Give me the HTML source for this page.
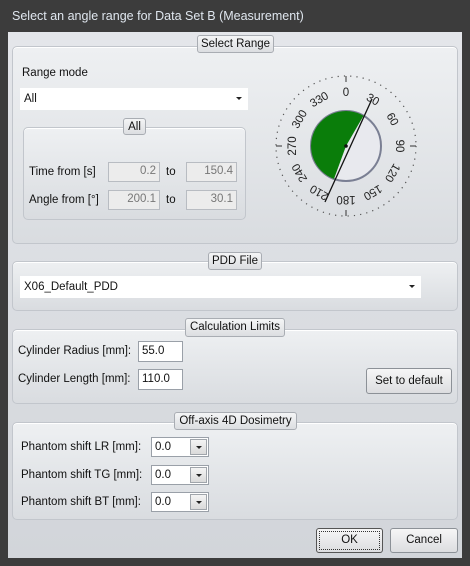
<!DOCTYPE html>
<html><head><meta charset="utf-8"><style>
*{margin:0;padding:0;box-sizing:border-box}
body{width:470px;height:566px;background:#3c3c3c;font-family:"Liberation Sans",sans-serif;font-size:11.5px;color:#111;position:relative;overflow:hidden}
.a{position:absolute}
.title{left:12px;top:9px;color:#dfe6ee;font-size:12.5px}
.client{left:8px;top:32px;width:454px;height:526px;background:linear-gradient(#e4e6ea,#d2d5da)}
.grp{position:absolute;border:1px solid #c2c6cc;border-radius:5px;background:linear-gradient(#eef0f2,#d9dce0);box-shadow:inset 0 1px 0 #fff}
.tab{position:absolute;border:1px solid #a9adb3;border-radius:3px;background:linear-gradient(#f4f5f6,#dcdee1);text-align:center;font-size:11.5px;line-height:16px;color:#111}
.inp{position:absolute;background:#fff;border:1px solid #9aa0a8;padding-left:3px;line-height:18px;font-size:11.5px}
.dis{position:absolute;background:#ececec;border:1px solid #b8bcc2;text-align:right;padding-right:3px;line-height:17px;color:#777}
.combo{position:absolute;background:#fff;line-height:22px;padding-left:4px}
.arr{position:absolute;right:6px;top:9px;width:0;height:0;border-left:3px solid transparent;border-right:3px solid transparent;border-top:3px solid #222}
.btn{position:absolute;border:1px solid #8c9197;border-radius:3px;background:linear-gradient(#f6f6f6,#dcdde0);text-align:center;font-size:11.5px}
.sb{position:absolute;right:1px;top:1px;width:17px;height:16px;border:1px solid #a0a5ab;background:linear-gradient(#f4f4f4,#dadada)}
.sb:after{content:"";position:absolute;left:5px;top:6px;border-left:3px solid transparent;border-right:3px solid transparent;border-top:3px solid #222}
</style></head><body>
<div class="a title">Select an angle range for Data Set B (Measurement)</div>
<div class="a client"></div>

<div class="grp" style="left:12px;top:46px;width:446px;height:198px"></div>
<div class="tab" style="left:197px;top:35px;width:77px;height:18px">Select Range</div>
<div class="a" style="left:22px;top:67px">Range mode</div>
<div class="combo" style="left:20px;top:88px;width:228px;height:22px">All<div class="arr"></div></div>
<div class="grp" style="left:23px;top:127px;width:223px;height:93px"></div>
<div class="tab" style="left:123px;top:118px;width:23px;height:17px">All</div>
<div class="a" style="left:29px;top:166px">Time from [s]</div>
<div class="dis" style="left:108px;top:162px;width:52px;height:20px">0.2</div>
<div class="a" style="left:166px;top:166px">to</div>
<div class="dis" style="left:186px;top:162px;width:51px;height:20px">150.4</div>
<div class="a" style="left:29px;top:194px">Angle from [°]</div>
<div class="dis" style="left:108px;top:190px;width:52px;height:20px">200.1</div>
<div class="a" style="left:166px;top:194px">to</div>
<div class="dis" style="left:186px;top:190px;width:51px;height:20px">30.1</div>

<svg class="a" style="left:0;top:0" width="470" height="566">
<circle cx="346" cy="146" r="35" fill="#e8e9ee" stroke="#7a7f93" stroke-width="2"/>
<path d="M346 146 L334 178.9 A35 35 0 1 1 363.5 115.7 Z" fill="#0a7d0a"/>
<line x1="325" y1="202" x2="372" y2="99" stroke="#111" stroke-width="1.3"/>
<circle cx="346" cy="146" r="1.8" fill="#111"/>
<g font-family="Liberation Sans" font-size="11.5" fill="#222" text-anchor="middle">
<text x="346" y="96" transform="rotate(0 346 146)">0</text>
<text x="346" y="96" transform="rotate(30 346 146)">30</text>
<text x="346" y="96" transform="rotate(60 346 146)">60</text>
<text x="346" y="96" transform="rotate(90 346 146)">90</text>
<text x="346" y="96" transform="rotate(120 346 146)">120</text>
<text x="346" y="96" transform="rotate(150 346 146)">150</text>
<text x="346" y="96" transform="rotate(180 346 146)">180</text>
<text x="346" y="96" transform="rotate(210 346 146)">210</text>
<text x="346" y="96" transform="rotate(240 346 146)">240</text>
<text x="346" y="96" transform="rotate(270 346 146)">270</text>
<text x="346" y="96" transform="rotate(300 346 146)">300</text>
<text x="346" y="96" transform="rotate(330 346 146)">330</text>
</g>
<g stroke="#333" stroke-width="1">
<line x1="346" y1="76" x2="346" y2="82" transform="rotate(0 346 146)"/>
<line x1="346" y1="76" x2="346" y2="82" transform="rotate(90 346 146)"/>
<line x1="346" y1="76" x2="346" y2="82" transform="rotate(180 346 146)"/>
<line x1="346" y1="76" x2="346" y2="82" transform="rotate(270 346 146)"/>
</g>
<g stroke="#555" stroke-width="1.2" stroke-dasharray="1.2 5.1" fill="none">
<circle cx="346" cy="146" r="70"/>
</g>
</svg>

<div class="grp" style="left:12px;top:261px;width:446px;height:50px"></div>
<div class="tab" style="left:208px;top:252px;width:54px;height:18px">PDD File</div>
<div class="combo" style="left:20px;top:276px;width:401px;height:22px">X06_Default_PDD<div class="arr"></div></div>

<div class="grp" style="left:12px;top:329px;width:446px;height:75px"></div>
<div class="tab" style="left:185px;top:318px;width:100px;height:19px">Calculation Limits</div>
<div class="a" style="left:18px;top:345px">Cylinder Radius [mm]:</div>
<div class="inp" style="left:138px;top:341px;width:45px;height:21px">55.0</div>
<div class="a" style="left:18px;top:373px">Cylinder Length [mm]:</div>
<div class="inp" style="left:138px;top:369px;width:45px;height:21px">110.0</div>
<div class="btn" style="left:366px;top:368px;width:86px;height:26px;line-height:24px">Set to default</div>

<div class="grp" style="left:12px;top:422px;width:446px;height:98px"></div>
<div class="tab" style="left:174px;top:412px;width:123px;height:18px">Off-axis 4D Dosimetry</div>
<div class="a" style="left:21px;top:441px">Phantom shift LR [mm]:</div>
<div class="inp" style="left:151px;top:437px;width:58px;height:20px">0.0<div class="sb"></div></div>
<div class="a" style="left:21px;top:469px">Phantom shift TG [mm]:</div>
<div class="inp" style="left:151px;top:465px;width:58px;height:20px">0.0<div class="sb"></div></div>
<div class="a" style="left:21px;top:496px">Phantom shift BT [mm]:</div>
<div class="inp" style="left:151px;top:492px;width:58px;height:20px">0.0<div class="sb"></div></div>

<div class="btn" style="left:316px;top:528px;width:67px;height:25px;line-height:23px;border-color:#555;outline:1px dotted #333;outline-offset:-4px">OK</div>
<div class="btn" style="left:390px;top:528px;width:68px;height:25px;line-height:23px">Cancel</div>
</body></html>
